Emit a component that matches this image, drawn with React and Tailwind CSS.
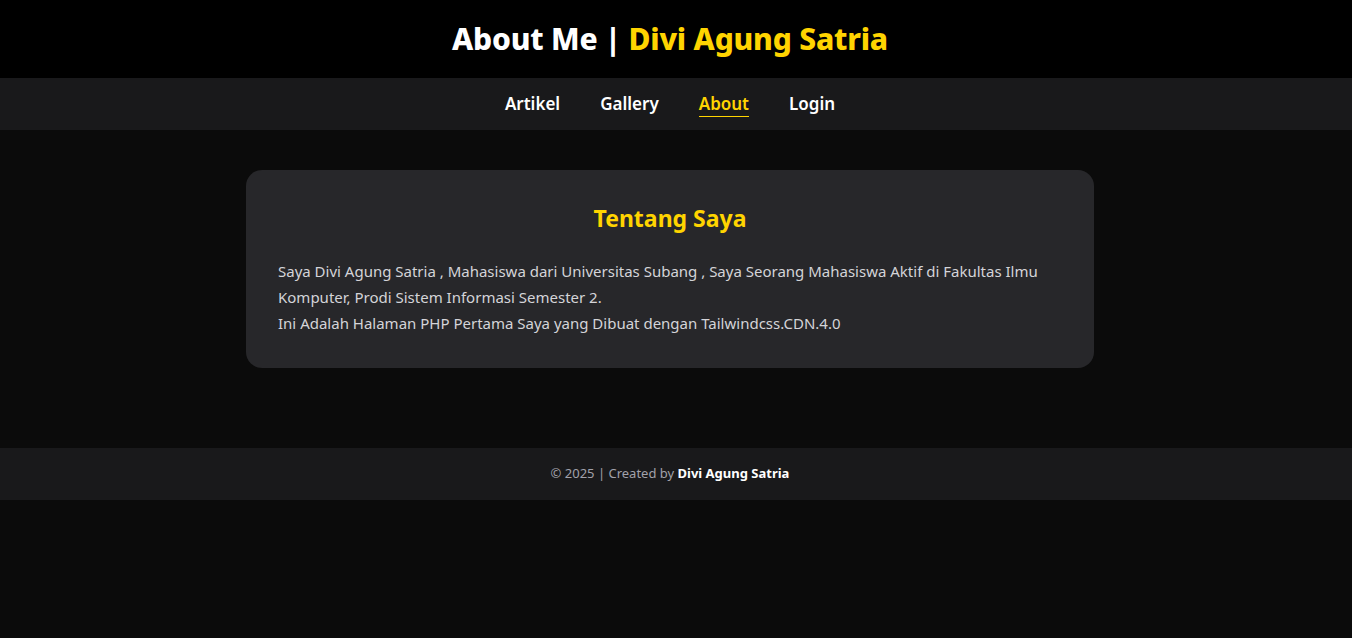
import React from 'react';

const links = ['Artikel', 'Gallery', 'About', 'Login'];

const App = () => {
  return (
    <div className="min-h-screen bg-[#0b0b0b] font-['Segoe_UI','Noto_Sans',sans-serif] text-white">
      <header className="bg-black h-[78px] flex items-center justify-center pr-3">
        <h1 className="text-3xl font-extrabold tracking-[-0.2px]">
          About Me | <span className="text-[#ffd400]">Divi Agung Satria</span>
        </h1>
      </header>

      <nav className="bg-[#19191b] h-[52px] flex items-center justify-center gap-10 pr-3">
        {links.map((link) =>
          link === 'About' ? (
            <a key={link} href="#" className="text-[17px] font-semibold text-[#ffd400] border-b border-[#ffd400] leading-6">
              {link}
            </a>
          ) : (
            <a key={link} href="#" className="text-[17px] font-semibold text-white leading-6">
              {link}
            </a>
          )
        )}
      </nav>

      <main className="pr-3 pt-10 pb-20">
        <div className="max-w-[896px] mx-auto px-6">
          <div className="bg-[#27272a] rounded-2xl p-8">
            <h2 className="text-[23px] leading-8 font-bold text-[#ffd400] text-center mb-6">Tentang Saya</h2>
            <p className="text-[15px] leading-[26px] text-[#d4d4d8]">
              Saya Divi Agung Satria , Mahasiswa dari Universitas Subang , Saya Seorang Mahasiswa Aktif di Fakultas Ilmu
              Komputer, Prodi Sistem Informasi Semester 2.
              <br />
              Ini Adalah Halaman PHP Pertama Saya yang Dibuat dengan Tailwindcss.CDN.4.0
            </p>
          </div>
        </div>
      </main>

      <footer className="bg-[#19191b] h-[52px] flex items-center justify-center pr-3 text-[13px] text-[#a1a1aa]">
        <span>
          © 2025 | Created by <span className="font-bold text-white">Divi Agung Satria</span>
        </span>
      </footer>
    </div>
  );
};

export default App;
